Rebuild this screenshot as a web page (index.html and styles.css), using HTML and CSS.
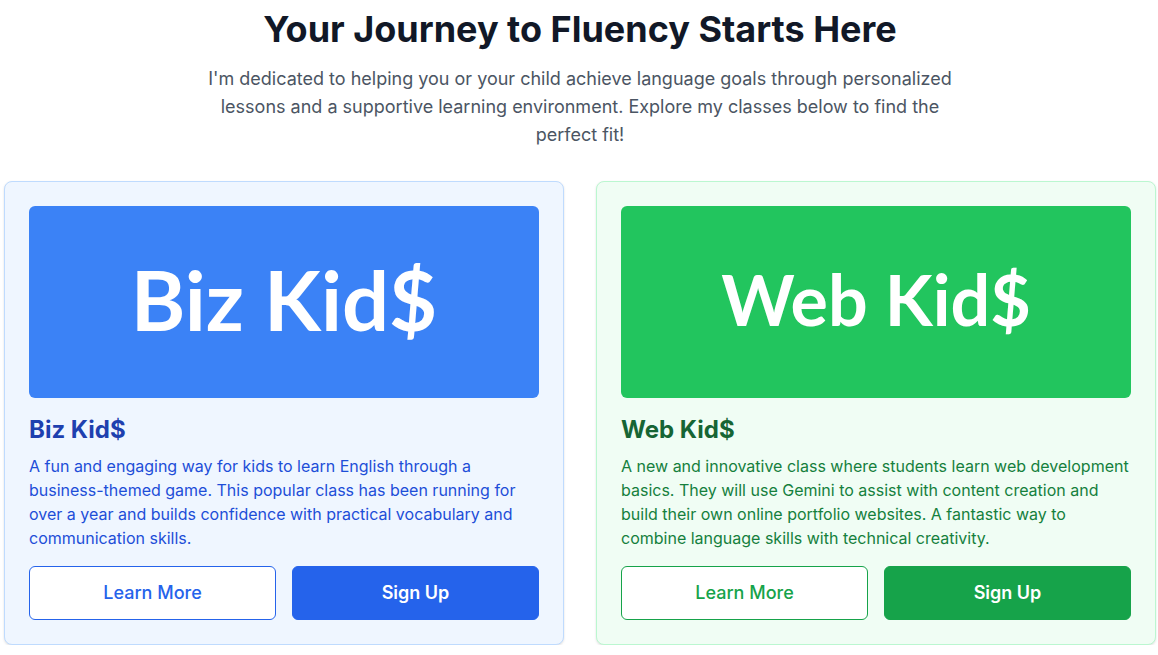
FILE: index.html
```html
<!DOCTYPE html>
<html lang="en">
<head>
<meta charset="utf-8">
<title>Your Journey to Fluency Starts Here</title>
<link rel="stylesheet" href="styles.css">
</head>
<body>
<main class="page">
  <header class="intro">
    <h1 class="intro-title">Your Journey to Fluency Starts Here</h1>
    <p class="intro-text">I'm dedicated to helping you or your child achieve language goals through personalized lessons and a supportive learning environment. Explore my classes below to find the perfect fit!</p>
  </header>
  <section class="cards">
    <article class="card card-blue">
      <div class="banner"><span class="banner-text banner-text-biz">Biz Kid$</span></div>
      <h2 class="card-title">Biz Kid$</h2>
      <p class="card-text">A fun and engaging way for kids to learn English through a business-themed game. This popular class has been running for over a year and builds confidence with practical vocabulary and communication skills.</p>
      <div class="actions">
        <a class="btn btn-outline" href="#">Learn More</a>
        <a class="btn btn-solid" href="#">Sign Up</a>
      </div>
    </article>
    <article class="card card-green">
      <div class="banner"><span class="banner-text banner-text-web">Web Kid$</span></div>
      <h2 class="card-title">Web Kid$</h2>
      <p class="card-text">A new and innovative class where students learn web development basics. They will use Gemini to assist with content creation and build their own online portfolio websites. A fantastic way to combine language skills with technical creativity.</p>
      <div class="actions">
        <a class="btn btn-outline" href="#">Learn More</a>
        <a class="btn btn-solid" href="#">Sign Up</a>
      </div>
    </article>
  </section>
</main>
</body>
</html>
```
FILE: styles.css
```css
* { box-sizing: border-box; }
html, body { margin: 0; padding: 0; background: #ffffff; }
body { font-family: Inter, "Liberation Sans", Arial, sans-serif; color: #111827; }

.page { padding: 9px 2px 0 4px; }

.intro { text-align: center; margin-bottom: 32px; }
.intro-title {
  margin: 0 0 16px;
  font-size: 36px;
  line-height: 40px;
  font-weight: 700;
  color: #111827;
}
.intro-text {
  margin: 0 auto;
  max-width: 768px;
  font-size: 18px;
  line-height: 28px;
  color: #4b5563;
}

.cards {
  display: grid;
  grid-template-columns: 1fr 1fr;
  gap: 32px;
}

.card {
  border: 1px solid;
  border-radius: 8px;
  padding: 24px;
  box-shadow: 0 1px 3px rgba(0,0,0,0.08), 0 1px 2px rgba(0,0,0,0.05);
}
.card-blue { background: #eff6ff; border-color: #bfdbfe; }
.card-green { background: #f0fdf4; border-color: #bbf7d0; }

.banner {
  height: 192px;
  border-radius: 6px;
  display: flex;
  align-items: center;
  justify-content: center;
  padding-bottom: 6px;
}
.card-blue .banner { background: #3b82f6; }
.card-green .banner { background: #22c55e; }

.banner-text {
  font-family: Lato, "Open Sans", sans-serif;
  font-weight: 700;
  line-height: 1;
  color: #ffffff;
  white-space: nowrap;
}
.banner-text-biz { font-size: 83px; }
.banner-text-web { font-size: 70px; }

.card-title {
  margin: 16px 0 8px;
  font-size: 24px;
  line-height: 32px;
  font-weight: 700;
}
.card-blue .card-title { color: #1e40af; }
.card-green .card-title { color: #166534; }

.card-text {
  margin: 0 0 16px;
  font-size: 16px;
  line-height: 24px;
}
.card-blue .card-text { color: #1d4ed8; }
.card-green .card-text { color: #15803d; }

.actions {
  display: grid;
  grid-template-columns: 1fr 1fr;
  gap: 16px;
}
.btn {
  display: block;
  text-align: center;
  text-decoration: none;
  font-size: 18px;
  line-height: 28px;
  padding: 12px 16px;
  border: 1px solid;
  border-radius: 6px;
}
.btn-outline { background: #ffffff; font-weight: 500; }
.btn-solid { color: #ffffff; font-weight: 600; }
.card-blue .btn-outline { border-color: #2563eb; color: #2563eb; }
.card-blue .btn-solid { background: #2563eb; border-color: #2563eb; }
.card-green .btn-outline { border-color: #16a34a; color: #16a34a; }
.card-green .btn-solid { background: #16a34a; border-color: #16a34a; }
```
